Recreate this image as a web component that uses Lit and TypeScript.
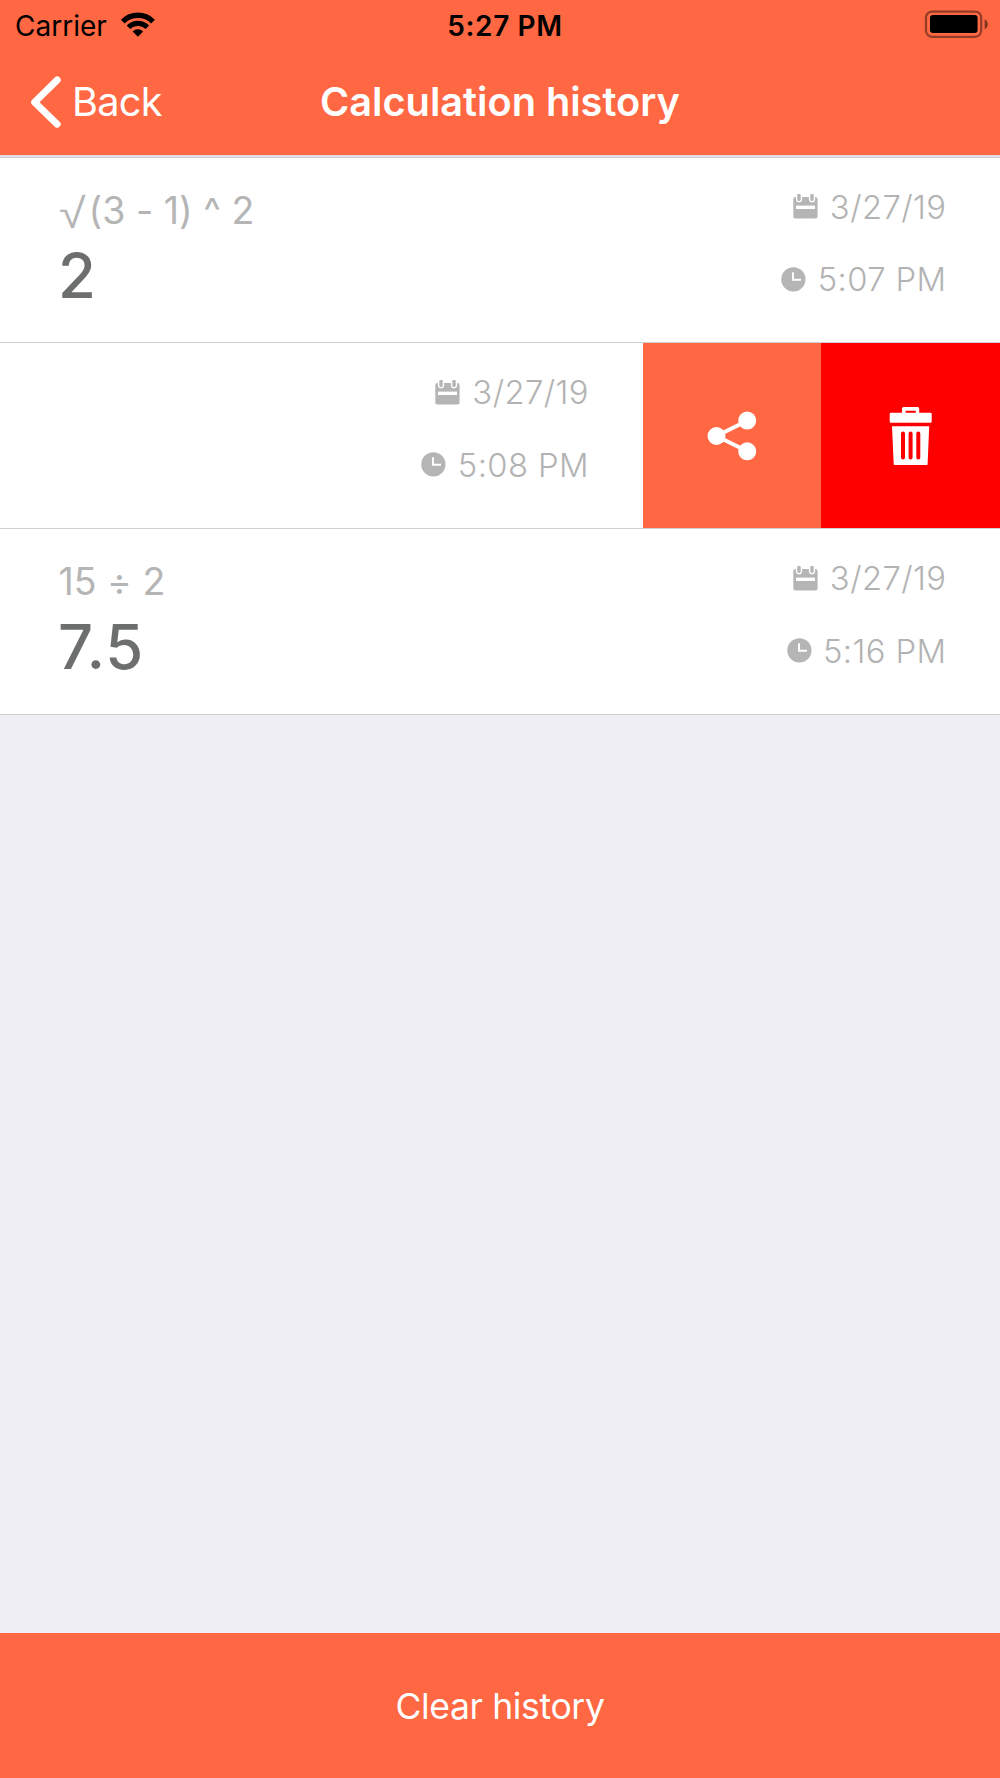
import { LitElement, html, css, svg, nothing } from "lit";
import { customElement, property } from "lit/decorators.js";

interface Entry {
  root?: boolean;
  expression?: string;
  result?: string;
  date: string;
  time: string;
  open?: boolean;
}

const entries: Entry[] = [
  { root: true, expression: "(3 - 1) ^ 2", result: "2", date: "3/27/19", time: "5:07 PM" },
  { date: "3/27/19", time: "5:08 PM", open: true },
  { expression: "15 ÷ 2", result: "7.5", date: "3/27/19", time: "5:16 PM" },
];

const calendarIcon = html`<svg width="25" height="25" viewBox="0 0 25 25">
  <path fill="#b5b5b5" d="M2.5 3H22.3Q24.6 3 24.6 5.2V22.3Q24.6 24.5 22.3 24.5H2.5Q.3 24.5 .3 22.3V5.2Q.3 3 2.5 3Z" />
  ${[6, 19].map(
    (x) => svg`<path d="M${x} 0V5.2" stroke="#fff" stroke-width="6.2" stroke-linecap="round" />
      <path d="M${x} 1.4V5.4" stroke="#b5b5b5" stroke-width="3.4" stroke-linecap="round" />`
  )}
  <path fill="#fff" d="M3 11.6H22V15H3Z" />
</svg>`;

const clockIcon = html`<svg width="25" height="25" viewBox="0 0 25 25">
  <circle cx="12.4" cy="12.4" r="12.1" fill="#b5b5b5" />
  <path d="M12 5.2V12.7H20" fill="none" stroke="#fff" stroke-width="1.9" />
</svg>`;

@customElement("status-bar")
class StatusBar extends LitElement {
  static styles = css`
    :host {
      display: grid;
      grid-template-columns: 1fr auto 1fr;
      align-items: center;
      height: 50px;
      padding: 0 11px 0 15px;
      color: #000;
      font-size: 28px;
      line-height: 34px;
    }
    .left { display: flex; align-items: center; gap: 13px; }
    .carrier { padding-top: 2px; }
    .time { font-weight: 600; letter-spacing: 0.6px; padding: 2px 0 0 6px; }
    .right { display: flex; justify-content: flex-end; }
    svg { display: block; }
  `;
  render() {
    return html`
      <div class="left">
        <span class="carrier">Carrier</span>
        <svg width="36" height="28" viewBox="120 10.5 36 28">
          <g fill="none" stroke="#000">
            <path d="M122.77 21.07A21.4 21.4 0 0 1 153.03 21.07" stroke-width="5.4" />
            <path d="M128.46 26.76A13.35 13.35 0 0 1 147.34 26.76" stroke-width="5.2" />
          </g>
          <path d="M137.9 36.2L132.6 30.9A7.5 7.5 0 0 1 143.2 30.9Z" />
        </svg>
      </div>
      <span class="time">5:27 PM</span>
      <div class="right">
        <svg width="65" height="30" viewBox="924 10 65 30">
          <rect x="926" y="11.6" width="55.2" height="25.2" rx="6" fill="none" stroke="#000" stroke-opacity=".42" stroke-width="2.2" />
          <rect x="930" y="15" width="47.6" height="18" rx="3" />
          <path d="M984.6 19.2Q987.8 20.8 987.8 24.2T984.6 29.2Z" fill-opacity=".5" />
        </svg>
      </div>
    `;
  }
}

@customElement("history-row")
class HistoryRow extends LitElement {
  @property({ attribute: false }) entry!: Entry;

  static styles = css`
    :host {
      display: flex;
      box-sizing: border-box;
      border-bottom: 1px solid #cfced2;
      background: #fff;
      overflow: hidden;
      font-feature-settings: "calt" 0;
    }
    .content {
      flex: 1;
      display: flex;
      justify-content: space-between;
      padding: 29px 53.5px 0 58.5px;
    }
    :host(:first-child) .meta { margin-top: -0.5px; }
    .expression {
      display: flex;
      height: 46px;
      padding-top: 1px;
      font-size: 37.5px;
      line-height: 46px;
      color: #b5b5b5;
      white-space: pre;
    }
    .root {
      width: 30px;
      font-family: "Liberation Sans", sans-serif;
      font-size: 42px;
      line-height: 51px;
      transform: scaleX(1.15);
      transform-origin: 0 0;
    }
    .result {
      margin-top: 4px;
      margin-left: -0.5px;
      font-size: 61.5px;
      font-weight: 480;
      line-height: 75px;
      letter-spacing: 1px;
      color: #6d6f6e;
    }
    .meta {
      display: flex;
      flex-direction: column;
      align-items: flex-end;
      gap: 32.5px;
      margin-left: auto;
      font-size: 32.8px;
      font-weight: 360;
      line-height: 40px;
      letter-spacing: 0.4px;
      color: #b3b3b3;
    }
    .line { display: flex; align-items: center; gap: 12px; height: 40px; white-space: nowrap; }
    .line + .line { gap: 11.5px; }
    .line svg { display: block; }
    .actions { display: grid; grid-template-columns: 178.5px 179px; }
    .action { display: grid; place-items: center; border: 0; padding: 0; }
    .share { background: #ff6842; }
    .delete { background: #f00; }
  `;

  render() {
    const e = this.entry;
    return html`
      <div class="content">
        <div>
          <div class="expression">${e.root ? html`<span class="root">√</span>` : nothing}<span>${e.expression ?? nothing}</span></div>
          <div class="result">${e.result ?? nothing}</div>
        </div>
        <div class="meta">
          <div class="line">${calendarIcon}<span>${e.date}</span></div>
          <div class="line">${clockIcon}<span>${e.time}</span></div>
        </div>
      </div>
      ${e.open
        ? html`<div class="actions">
            <button class="action share" aria-label="Share">
              <svg width="50" height="50" viewBox="707 410.7 50 50">
                <g fill="#fff">
                  <path d="M747.2 420.4L716.5 435.7L747.2 451" fill="none" stroke="#fff" stroke-width="4" />
                  <circle cx="716.5" cy="435.7" r="9" />
                  <circle cx="747.2" cy="420.3" r="9" />
                  <circle cx="747.2" cy="451" r="9" />
                </g>
              </svg>
            </button>
            <button class="action delete" aria-label="Delete">
              <svg width="46" height="60" viewBox="888 405.7 46 60">
                <path fill="#fff" fill-rule="evenodd" d="M891 412.4H902V408.2Q902 406.6 903.6 406.6H917.6Q919.2 406.6 919.2 408.2V412.4H930.4Q931.7 412.4 931.7 413.7V421.2Q931.7 422.5 930.4 422.5H891Q889.7 422.5 889.7 421.2V413.7Q889.7 412.4 891 412.4ZM905.6 410.4V412.4H915.8V410.4Z" />
                <path fill="#fff" d="M892 426H929.2L927.6 463.6Q927.5 464.8 926.3 464.8H895Q893.8 464.8 893.7 463.6Z" />
                <path d="M903 433.3V457.3M910.6 433.3V457.3M918.3 433.3V457.3" stroke="#f00" stroke-width="4" stroke-linecap="round" />
              </svg>
            </button>
          </div>`
        : nothing}
    `;
  }
}

@customElement("app-root")
class AppRoot extends LitElement {
  static styles = css`
    :host {
      display: flex;
      flex-direction: column;
      width: 1000px;
      height: 1778px;
      background: #efeef4;
      font-family: Inter, "Liberation Sans", sans-serif;
    }
    .header { height: 155px; background: #ff6842; }
    .nav {
      display: grid;
      grid-template-columns: 1fr auto 1fr;
      align-items: center;
      height: 103px;
      padding: 0 30px;
      color: #fff;
      font-size: 39.7px;
      line-height: 48px;
    }
    .back { display: flex; align-items: center; gap: 11px; letter-spacing: -0.7px; }
    .back svg { display: block; }
    .title { font-weight: 600; letter-spacing: 0; }
    .rule { height: 2px; background: #e0dfe4; border-bottom: 1px solid #cfced2; }
    .list { flex: 1; display: grid; grid-template-rows: 185px 186px 186px; }
    .clear {
      display: flex;
      align-items: center;
      justify-content: center;
      box-sizing: border-box;
      height: 145px;
      padding-top: 2px;
      background: #ff6842;
      color: #fff;
      font-size: 35.5px;
      line-height: 44px;
      letter-spacing: -0.35px;
    }
  `;

  render() {
    return html`
      <div class="header">
        <status-bar></status-bar>
        <div class="nav">
          <div class="back">
            <svg width="31" height="54" viewBox="30 75 31 54">
              <path d="M57.2 80L34.6 102.2L57.2 124.2" fill="none" stroke="#fff" stroke-width="6.9" stroke-linecap="round" stroke-linejoin="round" />
            </svg>
            <span>Back</span>
          </div>
          <span class="title">Calculation history</span>
        </div>
      </div>
      <div class="rule"></div>
      <div class="list">${entries.map((e) => html`<history-row .entry=${e}></history-row>`)}</div>
      <div class="clear">Clear history</div>
    `;
  }
}
